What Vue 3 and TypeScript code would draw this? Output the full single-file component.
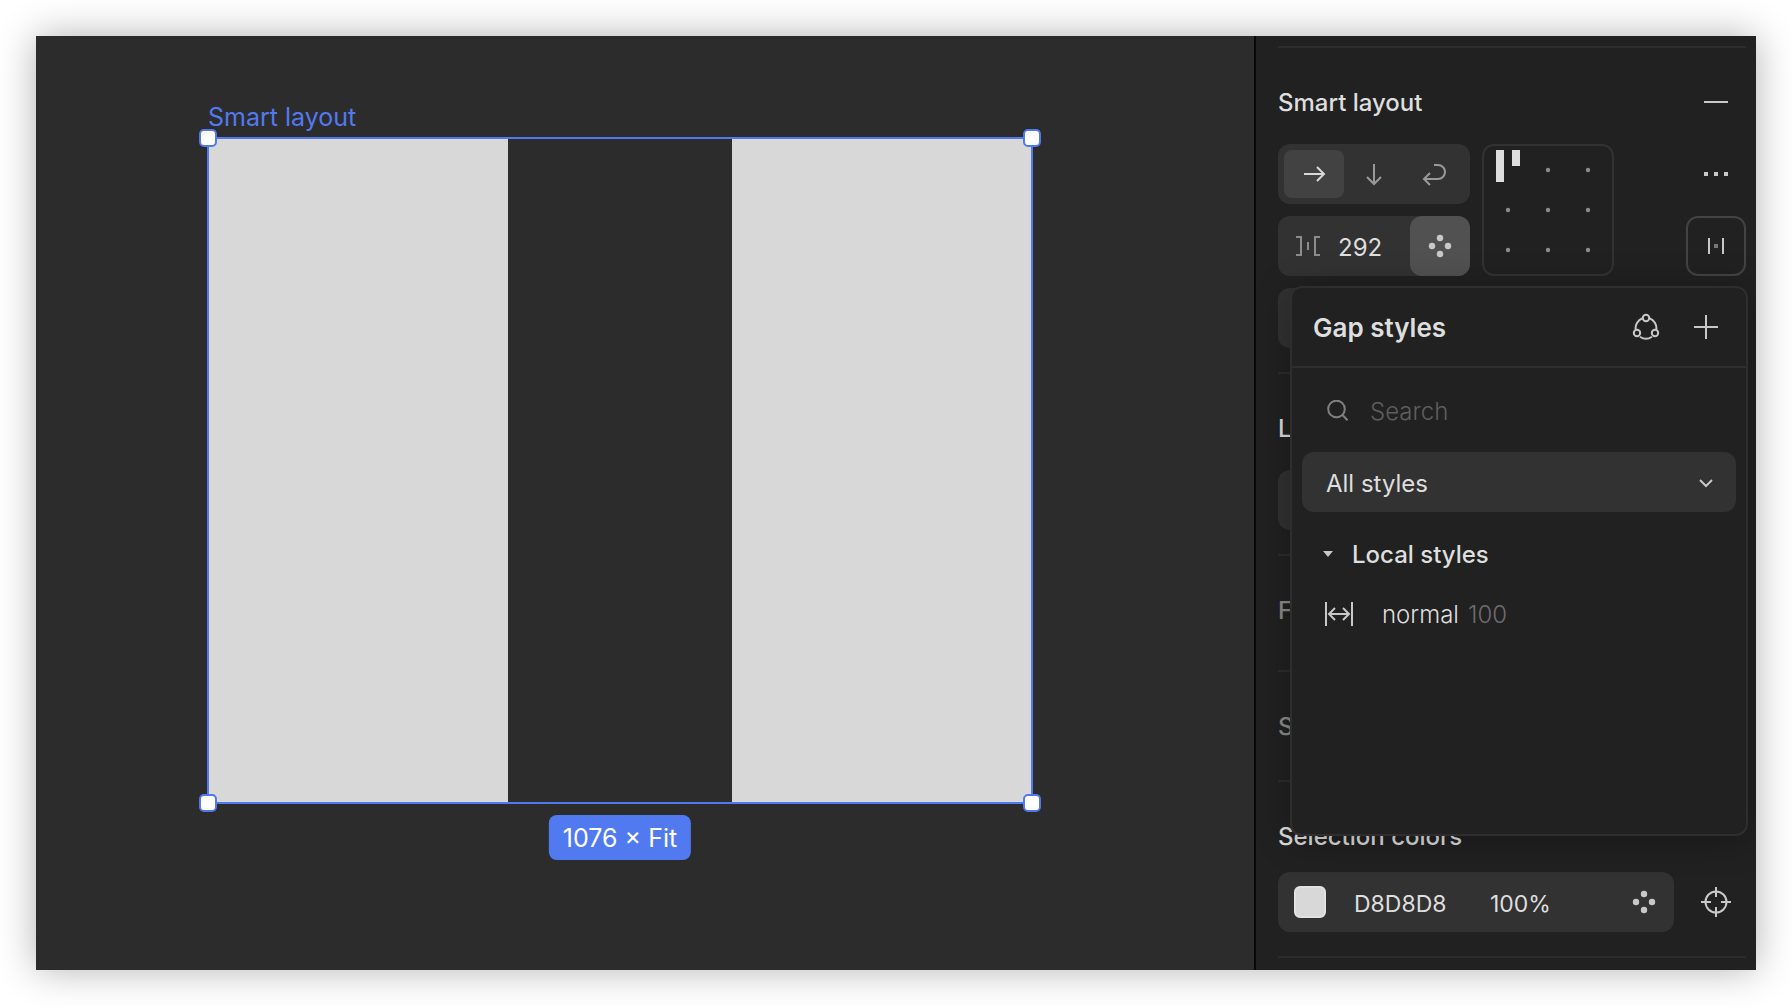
<script setup lang="ts">
import { ref } from 'vue'

type Direction = 'right' | 'down' | 'wrap'

const directions: { id: Direction; label: string; path: string }[] = [
  { id: 'right', label: 'Horizontal', path: 'M5 15H25M18 8L25 15L18 22' },
  { id: 'down', label: 'Vertical', path: 'M15 5V25M8 18L15 25L22 18' },
  { id: 'wrap', label: 'Wrap', path: 'M15 6H19A7 7 0 0 1 19 20H5M11 14L5 20L11 26' },
]

const direction = ref<Direction>('right')
const gap = ref('292')
const alignment = ref(0)
const query = ref('')
const library = ref('all')
const hex = ref('D8D8D8')
const opacity = ref('100%')
const gapStyles = [{ name: 'normal', value: 100 }]
</script>

<template>
  <div class="window">
    <main class="canvas">
      <div class="frame">
        <span class="frame-name">Smart layout</span>
        <div class="bar"></div>
        <div class="bar"></div>
        <i class="handle top left"></i>
        <i class="handle top right"></i>
        <i class="handle bottom left"></i>
        <i class="handle bottom right"></i>
        <span class="size">1076 × Fit</span>
      </div>
    </main>

    <aside class="panel">
      <section class="section">
        <header class="section-head">
          <h2>Smart layout</h2>
          <button class="icon-button" aria-label="Remove smart layout">
            <svg width="30" height="30" viewBox="0 0 30 30"><path d="M3 15H27" /></svg>
          </button>
        </header>
        <div class="layout-grid">
          <div class="segments">
            <button
              v-for="d in directions"
              :key="d.id"
              class="segment"
              :class="{ active: d.id === direction }"
              :aria-label="d.label"
              @click="direction = d.id"
            >
              <svg width="30" height="30" viewBox="0 0 30 30"><path :d="d.path" /></svg>
            </button>
          </div>
          <div class="alignment">
            <button
              v-for="n in 9"
              :key="n"
              class="cell"
              :aria-label="'Alignment ' + n"
              @click="alignment = n - 1"
            >
              <svg width="40" height="40" viewBox="0 0 40 40">
                <path v-if="alignment === n - 1" class="bars" d="M8 0H16V32H8ZM24 0H32V16H24Z" />
                <circle v-else cx="20" cy="20" r="2.2" />
              </svg>
            </button>
          </div>
          <button class="icon-button last" aria-label="More options">
            <svg width="30" height="30" viewBox="0 0 30 30">
              <path class="solid" d="M3 13h4v4h-4zM13 13h4v4h-4zM23 13h4v4h-4z" />
            </svg>
          </button>
          <div class="field gap-field">
            <svg class="muted" width="30" height="30" viewBox="0 0 30 30">
              <path d="M3 6H8V24H3M27 6H22V24H27M15 11V19" />
            </svg>
            <input v-model="gap" class="gap-input" aria-label="Gap" />
            <button class="style-button" aria-label="Gap styles">
              <svg width="30" height="30" viewBox="0 0 30 30">
                <g class="solid">
                  <circle cx="15" cy="7" r="3.2" /><circle cx="7" cy="15" r="3.2" />
                  <circle cx="23" cy="15" r="3.2" /><circle cx="15" cy="23" r="3.2" />
                </g>
              </svg>
            </button>
          </div>
          <button class="icon-button outlined last" aria-label="Space between">
            <svg width="30" height="30" viewBox="0 0 30 30">
              <path d="M8 7V23M22 7V23" /><path class="dim" d="M13 13h4v4h-4z" />
            </svg>
          </button>
          <div class="field"></div>
        </div>
      </section>

      <section class="section">
        <header class="section-head"><h2>Layer</h2></header>
        <div class="field"></div>
      </section>

      <section class="section empty fills">
        <header class="section-head"><h2>Fills</h2></header>
      </section>

      <section class="section empty">
        <header class="section-head"><h2>Strokes</h2></header>
      </section>

      <section class="section colors">
        <header class="section-head"><h2>Selection colors</h2></header>
        <div class="color-row">
          <div class="field color-field">
            <button class="swatch" aria-label="Color"></button>
            <input v-model="hex" class="hex" aria-label="Hex" />
            <input v-model="opacity" class="opacity" aria-label="Opacity" />
            <button class="icon-button" aria-label="Color styles">
              <svg width="30" height="30" viewBox="0 0 30 30">
                <g class="solid">
                  <circle cx="15" cy="7" r="3.2" /><circle cx="7" cy="15" r="3.2" />
                  <circle cx="23" cy="15" r="3.2" /><circle cx="15" cy="23" r="3.2" />
                </g>
              </svg>
            </button>
          </div>
          <button class="icon-button" aria-label="Select layers with this color">
            <svg width="30" height="30" viewBox="0 0 30 30">
              <circle cx="15" cy="15" r="10.5" />
              <path d="M15 0V10M15 20V30M0 15H10M20 15H30" />
            </svg>
          </button>
        </div>
      </section>
      <hr class="rule" />

      <div class="popover" role="dialog" aria-label="Gap styles">
        <header class="popover-head">
          <h3>Gap styles</h3>
          <button class="icon-button" aria-label="Libraries">
            <svg width="30" height="30" viewBox="0 0 30 30">
              <path d="M11.6 6.2A10.5 10.5 0 0 0 4.7 17.6M18.4 6.2A10.5 10.5 0 0 1 25.3 17.6M9 24.7A10.5 10.5 0 0 0 21 24.7" />
              <circle cx="15" cy="6" r="3.2" /><circle cx="6" cy="21" r="3.2" /><circle cx="24" cy="21" r="3.2" />
            </svg>
          </button>
          <button class="icon-button" aria-label="Create style">
            <svg width="30" height="30" viewBox="0 0 30 30"><path d="M3 15H27M15 3V27" /></svg>
          </button>
        </header>
        <div class="popover-body">
          <label class="search">
            <svg width="24" height="24" viewBox="0 0 24 24">
              <circle cx="10.5" cy="9" r="8.3" /><path d="M16.5 15L21.5 20.3" />
            </svg>
            <input v-model="query" type="text" placeholder="Search" aria-label="Search" />
          </label>
          <div class="select">
            <select v-model="library" aria-label="Library">
              <option value="all">All styles</option>
            </select>
            <svg width="30" height="30" viewBox="0 0 30 30"><path d="M9 13L15 19L21 13" /></svg>
          </div>
          <button class="group">
            <svg width="10" height="6" viewBox="0 0 10 6"><path class="solid" d="M0 0H10L5 6Z" /></svg>
            <span>Local styles</span>
          </button>
          <button v-for="s in gapStyles" :key="s.name" class="style-row">
            <svg width="30" height="30" viewBox="0 0 30 30">
              <path d="M2 3V27M28 3V27M5 15H25M11 9L5 15L11 21M19 9L25 15L19 21" />
            </svg>
            <span>{{ s.name }}</span>
            <span class="value">{{ s.value }}</span>
          </button>
        </div>
      </div>
    </aside>
  </div>
</template>

<style>
body {
  margin: 0;
  background: #fff;
}
</style>

<style scoped>
* {
  box-sizing: border-box;
}

.window {
  display: flex;
  min-height: calc(100vh - 72px);
  margin: 36px;
  background: #2c2c2c;
  box-shadow: 0 0 36px rgba(0, 0, 0, 0.3);
  color: #dedede;
  font: 24px/30px Inter, 'Liberation Sans', sans-serif;
}

button,
input,
select {
  padding: 0;
  border: 0;
  background: none;
  color: inherit;
  font: inherit;
}

input {
  min-width: 0;
}

h2,
h3 {
  margin: 0;
  padding-top: 2px;
  font-size: 24px;
  font-weight: 500;
}

svg {
  display: block;
  flex: none;
  fill: none;
  stroke: #c8c8c8;
  stroke-width: 2;
}

.solid {
  fill: #c8c8c8;
  stroke: none;
}

.dim {
  fill: #777;
  stroke: none;
}

.muted {
  stroke: #8c8c8c;
}

.canvas {
  position: relative;
  flex: 1;
  min-width: 0;
}

.frame {
  position: absolute;
  top: 101px;
  left: 171px;
  display: flex;
  justify-content: space-between;
  width: 826px;
  height: 667px;
  border: 2px solid #5079ee;
}

.frame-name {
  position: absolute;
  bottom: 100%;
  left: -1px;
  margin-bottom: 7px;
  color: #527af0;
  font-size: 25px;
}

.bar {
  width: 299px;
  background: #d8d8d8;
}

.handle {
  position: absolute;
  width: 18px;
  height: 18px;
  border: 2px solid #5079ee;
  border-radius: 5px;
  background: #fff;
}

.handle.top {
  top: -10px;
}

.handle.bottom {
  bottom: -10px;
}

.handle.left {
  left: -10px;
}

.handle.right {
  right: -10px;
}

.size {
  position: absolute;
  top: 100%;
  left: 50%;
  margin-top: 13px;
  padding: 8px 14px 7px;
  border-radius: 8px;
  background: #527af0;
  color: #fff;
  font-size: 25px;
  white-space: nowrap;
  transform: translateX(-50%);
}

.panel {
  position: relative;
  flex: none;
  width: 502px;
  padding: 10px 10px 12px 22px;
  border-left: 2px solid #080808;
  background: #212121;
}

.section {
  padding: 24px 0;
  border-top: 2px solid #2d2d2d;
}

.section-head {
  display: flex;
  align-items: center;
  justify-content: space-between;
  height: 60px;
  margin-bottom: 12px;
}

.empty {
  color: #8c8c8c;
}

.empty .section-head {
  margin: 0;
}

.fills {
  padding-bottom: 30px;
}

.colors .section-head {
  margin-bottom: 6px;
}

.rule {
  height: 2px;
  margin: 0;
  border: 0;
  background: #2d2d2d;
}

.icon-button {
  display: grid;
  flex: none;
  place-items: center;
  width: 60px;
  height: 60px;
}

.outlined {
  border: 2px solid #434343;
  border-radius: 12px;
}

.last {
  grid-column: 4;
}

.layout-grid {
  display: grid;
  grid-template-columns: 192px 132px 1fr 60px;
  gap: 12px;
}

.segments {
  display: flex;
  padding: 6px;
  border-radius: 12px;
  background: #323232;
}

.segment {
  display: grid;
  flex: 1;
  place-items: center;
  border-radius: 8px;
}

.segment svg {
  stroke: #999;
}

.segment.active {
  background: #424242;
}

.segment.active svg {
  stroke: #d8d8d8;
}

.alignment {
  display: grid;
  grid-template-columns: repeat(3, 40px);
  grid-row: span 2;
  padding: 4px;
  border: 2px solid #323232;
  border-radius: 12px;
}

.cell {
  height: 40px;
}

.cell circle {
  fill: #8c8c8c;
  stroke: none;
}

.bars {
  fill: #dedede;
  stroke: none;
}

.field {
  display: flex;
  align-items: center;
  height: 60px;
  border-radius: 12px;
  background: #323232;
}

.field input {
  padding-top: 4px;
}

.gap-field {
  gap: 15px;
  padding-left: 15px;
}

.gap-input {
  flex: 1;
}

.style-button {
  display: grid;
  place-items: center;
  width: 60px;
  height: 60px;
  border-radius: 12px;
  background: #515151;
}

.color-row {
  display: flex;
  gap: 12px;
}

.color-field {
  flex: 1;
  min-width: 0;
  padding-left: 16px;
  font-size: 23px;
}

.swatch {
  flex: none;
  width: 32px;
  height: 32px;
  margin-right: 28px;
  border: 2px solid #e2e2e2;
  border-radius: 6px;
  background: #d8d8d8;
}

.hex {
  width: 136px;
}

.opacity {
  flex: 1;
}

.popover {
  position: absolute;
  top: 250px;
  right: 8px;
  left: 34px;
  min-height: 550px;
  border: 2px solid #2e2e2e;
  border-radius: 12px;
  background: #212121;
  box-shadow: 0 4px 36px rgba(0, 0, 0, 0.3);
  clip-path: inset(-40px -8px -40px -34px);
}

.popover-head {
  display: flex;
  align-items: center;
  height: 80px;
  padding: 0 10px 0 21px;
  border-bottom: 2px solid #2e2e2e;
}

.popover-head h3 {
  flex: 1;
  font-size: 26px;
  font-weight: 600;
}

.popover-body {
  display: flex;
  flex-direction: column;
  padding: 14px 10px;
}

.search {
  display: flex;
  align-items: center;
  gap: 20px;
  height: 60px;
  margin-bottom: 10px;
  padding: 0 24px;
  font-weight: 300;
}

.search svg {
  stroke: #808080;
}

.search input {
  flex: 1;
}

.search input::placeholder {
  color: #5e5e5e;
}

.select {
  display: grid;
  align-items: center;
  height: 60px;
  margin-bottom: 12px;
  border-radius: 12px;
  background: #323232;
}

.select > * {
  grid-area: 1 / 1;
}

.select select {
  height: 60px;
  padding: 4px 24px 0;
  appearance: none;
}

.select svg {
  justify-self: end;
  margin-right: 15px;
  pointer-events: none;
}

.group,
.style-row {
  display: flex;
  align-items: center;
  height: 60px;
}

.group span,
.style-row span {
  padding-top: 2px;
}

.group {
  gap: 19px;
  padding-left: 21px;
  font-weight: 500;
}

.style-row {
  gap: 9px;
  padding-left: 22px;
  font-weight: 300;
}

.style-row svg {
  margin-right: 19px;
}

.value {
  color: #6c6c6c;
}
</style>
